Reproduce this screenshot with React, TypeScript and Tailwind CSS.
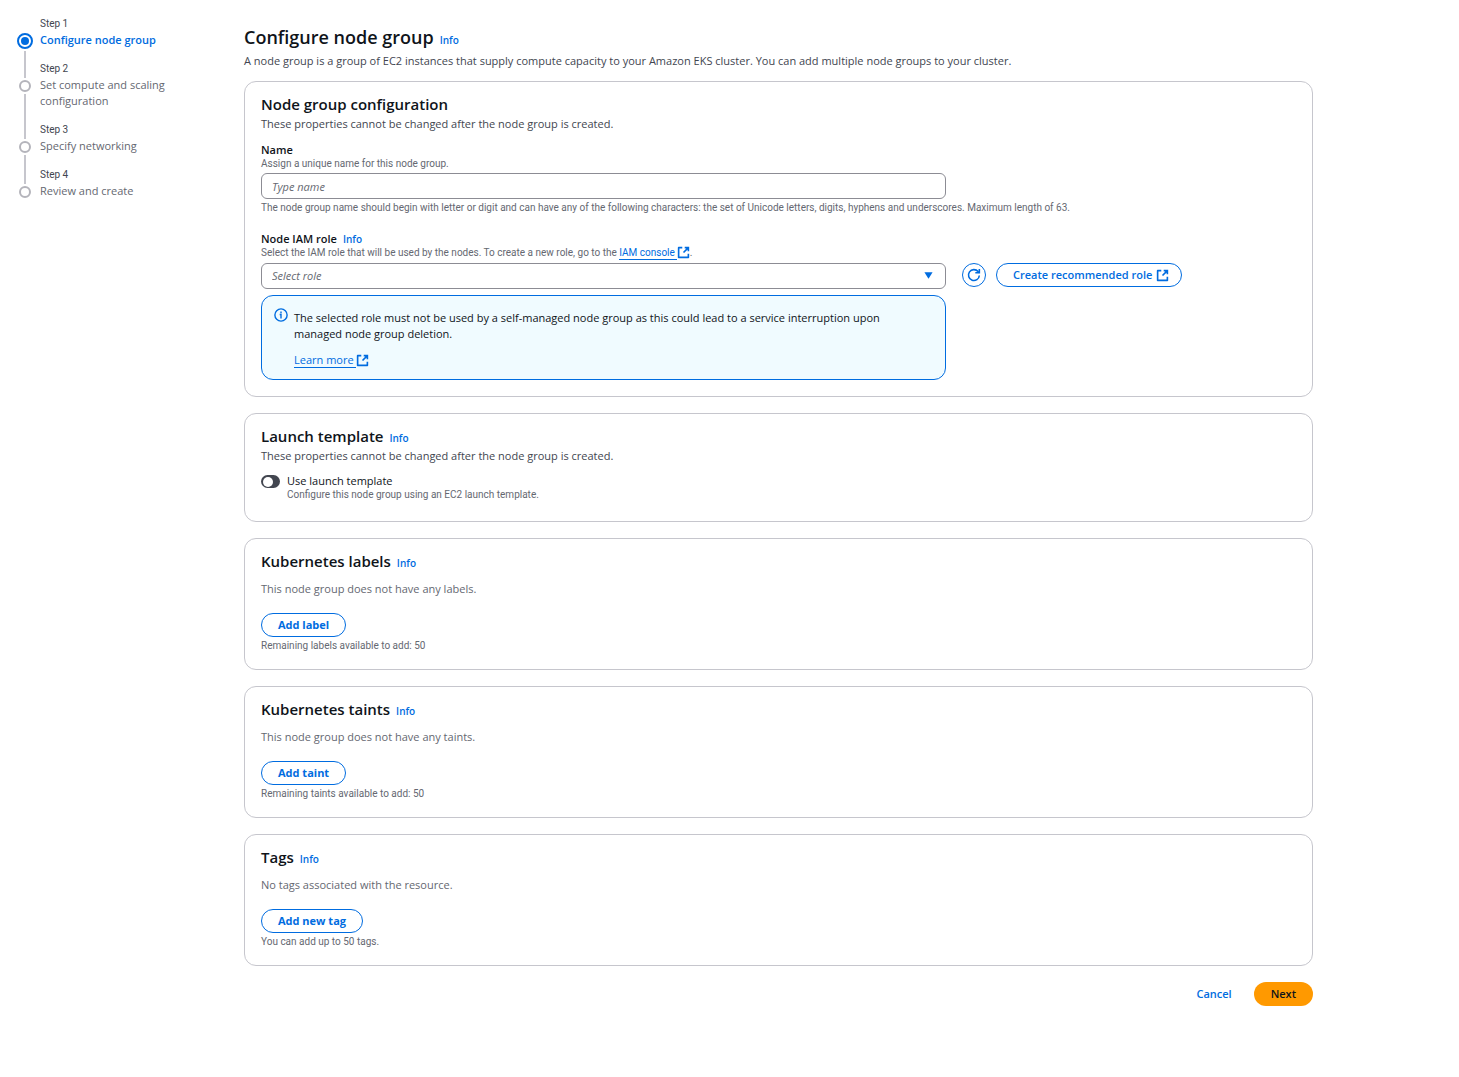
import React from 'react';

const steps = [
  'Configure node group',
  'Set compute and scaling configuration',
  'Specify networking',
  'Review and create',
];

function ExternalIcon() {
  return (
    <svg className="size-[13px] shrink-0" viewBox="0 0 16 16" fill="none" stroke="currentColor" strokeWidth="2" aria-hidden="true">
      <path d="M9.5 2H14v4.5M8 8L14 2" />
      <path d="M14 9.5V14H2V2h4.5" strokeLinejoin="round" />
    </svg>
  );
}

function InfoLink() {
  return (
    <a href="#info" className="text-[10px] leading-3 font-semibold text-[#006ce0]">
      Info
    </a>
  );
}

function Hint({ className = '', children }: { className?: string; children: React.ReactNode }) {
  return (
    <p className={`font-['Roboto',sans-serif] text-[10px] leading-[13px] text-[#656871] ${className}`}>
      {children}
    </p>
  );
}

function StepNav() {
  return (
    <nav className="w-[244px] shrink-0 pt-[17px] pr-10 pl-[17px]" aria-label="Steps">
      <ol>
        {steps.map((label, i) => (
          <li key={label} className="flex gap-[7px]">
            <div className="flex w-4 shrink-0 flex-col items-center">
              <span className={i === 0 ? 'h-4' : 'h-4 w-0.5 bg-[#c6c6cd]'} />
              {i === 0 ? (
                <span className="mb-0.5 flex size-4 shrink-0 items-center justify-center rounded-full border-2 border-[#006ce0]">
                  <span className="size-2 rounded-full bg-[#006ce0]" />
                </span>
              ) : (
                <span className="flex h-4 shrink-0 items-center">
                  <span className="size-3 rounded-full border-2 border-[#b4b4bb]" />
                </span>
              )}
              {i < steps.length - 1 && <span className="w-0.5 flex-1 bg-[#c6c6cd]" />}
            </div>
            <div className="pb-3.5">
              <div className="font-['Roboto',sans-serif] text-[10px] leading-[13px] text-[#424650]">Step {i + 1}</div>
              <a
                href={`#step-${i + 1}`}
                className={
                  i === 0
                    ? 'mt-0.5 block text-[11px] leading-4 font-semibold text-[#006ce0]'
                    : 'mt-0.5 block text-[11px] leading-4 text-[#656871]'
                }
              >
                {label}
              </a>
            </div>
          </li>
        ))}
      </ol>
    </nav>
  );
}

function Card({ title, info = true, description, children }: {
  title: string;
  info?: boolean;
  description?: string;
  children: React.ReactNode;
}) {
  return (
    <section className="rounded-xl border border-[#c6c6cd] px-4 pt-3 pb-4">
      <div className="flex h-5 items-baseline gap-1.5">
        <h2 className="text-[15px] leading-5 font-semibold text-[#0f141a]">{title}</h2>
        {info && <InfoLink />}
      </div>
      {description && <p className="mt-0.5 text-[11px] leading-4 text-[#424650]">{description}</p>}
      {children}
    </section>
  );
}

function EmptyCard({ title, empty, action, hint }: {
  title: string;
  empty: string;
  action: string;
  hint: string;
}) {
  return (
    <Card title={title}>
      <p className="mt-2.5 text-[11px] leading-4 text-[#656871]">{empty}</p>
      <button type="button" className="mt-4 block h-6 rounded-full border border-[#006ce0] px-4 text-[11px] font-bold text-[#006ce0]">
        {action}
      </button>
      <Hint className="mt-0.5 mb-px">{hint}</Hint>
    </Card>
  );
}

export default function App() {
  return (
    <div className="flex min-h-screen max-w-[1313px] bg-white font-['Open_Sans',sans-serif] text-[#0f141a]">
      <StepNav />
      <main className="min-w-0 flex-1 pt-[25px] pb-16">
        <div className="flex items-baseline gap-1.5">
          <h1 className="text-[18px] leading-6 font-semibold">Configure node group</h1>
          <InfoLink />
        </div>
        <p className="mt-1 text-[11px] leading-4 text-[#424650]">
          A node group is a group of EC2 instances that supply compute capacity to your Amazon EKS cluster. You can add
          multiple node groups to your cluster.
        </p>

        <form className="mt-3 flex flex-col gap-4">
          <Card title="Node group configuration" info={false} description="These properties cannot be changed after the node group is created.">
            {/* Name */}
            <label htmlFor="name" className="mt-[11px] block text-[11px] leading-[14px] font-semibold">
              Name
            </label>
            <Hint>Assign a unique name for this node group.</Hint>
            <input
              id="name"
              type="text"
              placeholder="Type name"
              className="mt-[3px] block h-[26px] w-full max-w-[685px] rounded-md border border-[#8c8c94] px-2.5 text-[11px] placeholder:text-[#656871] placeholder:italic"
            />
            <Hint className="mt-0.5">
              The node group name should begin with letter or digit and can have any of the following characters: the set
              of Unicode letters, digits, hyphens and underscores. Maximum length of 63.
            </Hint>

            {/* IAM role */}
            <div className="mt-[18px] flex h-3.5 items-center gap-1.5">
              <label htmlFor="role" className="text-[11px] leading-[14px] font-semibold">
                Node IAM role
              </label>
              <InfoLink />
            </div>
            <Hint className="flex h-[13px]">
              <span className="whitespace-pre">Select the IAM role that will be used by the nodes. To create a new role, go to the </span>
              <a href="#iam" className="flex text-[#006ce0]">
                <span className="h-3.5 border-b border-[#006ce0] pr-0.5">IAM console</span>
                <ExternalIcon />
              </a>
              .
            </Hint>
            <div className="mt-1 flex items-start gap-2.5">
              <div className="relative mr-1.5 w-full max-w-[685px]">
                <select
                  id="role"
                  defaultValue=""
                  className="block h-[26px] w-full appearance-none rounded-md border border-[#8c8c94] bg-white px-2.5 text-[11px] text-[#656871] italic"
                >
                  <option value="">Select role</option>
                </select>
                <svg className="pointer-events-none absolute top-1.5 right-[11px] size-[13px] text-[#006ce0]" viewBox="0 0 16 16" fill="currentColor" aria-hidden="true">
                  <path d="M3 4h10l-5 8z" />
                </svg>
              </div>
              <button type="button" aria-label="Refresh roles" className="flex size-6 shrink-0 items-center justify-center rounded-full border border-[#006ce0] text-[#006ce0]">
                <svg className="size-[14px]" viewBox="0 0 16 16" fill="none" stroke="currentColor" strokeWidth="1.8" aria-hidden="true">
                  <path d="M9.5 5.5h4.6V1" />
                  <path d="M14.1 8.5a6.2 6.2 0 1 1-1.4-4.4L14.1 5.5" />
                </svg>
              </button>
              <button type="button" className="flex h-6 items-center gap-1 rounded-full border border-[#006ce0] pr-3 pl-4 text-[11px] font-semibold whitespace-nowrap text-[#006ce0]">
                Create recommended role
                <ExternalIcon />
              </button>
            </div>

            <div className="mt-1.5 flex max-w-[685px] gap-1.5 rounded-xl border border-[#006ce0] bg-[#f0fbff] px-3 pt-3.5 pb-[11px] text-[11px] leading-4">
              <svg className="-mt-0.5 size-[14px] shrink-0 text-[#006ce0]" viewBox="0 0 16 16" fill="none" stroke="currentColor" aria-hidden="true">
                <circle cx="8" cy="8" r="7" strokeWidth="1.6" />
                <path d="M6.5 7.5H8V12M8 4v2" strokeWidth="1.6" />
              </svg>
              <div>
                <p className="max-w-[600px]">
                  The selected role must not be used by a self-managed node group as this could lead to a service
                  interruption upon managed node group deletion.
                </p>
                <a href="#learn" className="mt-2.5 flex h-4 items-center text-[#006ce0]">
                  <span className="border-b border-[#006ce0] pr-0.5 leading-[14px]">Learn more</span>
                  <ExternalIcon />
                </a>
              </div>
            </div>
          </Card>

          <Card title="Launch template" description="These properties cannot be changed after the node group is created.">
            <div className="mt-2.5 mb-1 flex gap-[7px]">
              <input
                id="launch-template"
                type="checkbox"
                role="switch"
                className="mt-px flex h-[13px] w-[19px] shrink-0 appearance-none items-center rounded-full bg-[#424650] px-0.5 before:size-[10px] before:rounded-full before:bg-white checked:justify-end checked:bg-[#006ce0]"
              />
              <div>
                <label htmlFor="launch-template" className="block text-[11px] leading-[14px]">
                  Use launch template
                </label>
                <Hint>Configure this node group using an EC2 launch template.</Hint>
              </div>
            </div>
          </Card>

          <EmptyCard
            title="Kubernetes labels"
            empty="This node group does not have any labels."
            action="Add label"
            hint="Remaining labels available to add: 50"
          />
          <EmptyCard
            title="Kubernetes taints"
            empty="This node group does not have any taints."
            action="Add taint"
            hint="Remaining taints available to add: 50"
          />
          <EmptyCard
            title="Tags"
            empty="No tags associated with the resource."
            action="Add new tag"
            hint="You can add up to 50 tags."
          />

          <div className="flex justify-end gap-1.5 text-[11px] font-semibold">
            <button type="button" className="h-6 rounded-full px-4 text-[#006ce0]">
              Cancel
            </button>
            <button type="submit" className="h-6 rounded-full bg-[#ff9900] px-[17px]">
              Next
            </button>
          </div>
        </form>
      </main>
    </div>
  );
}
